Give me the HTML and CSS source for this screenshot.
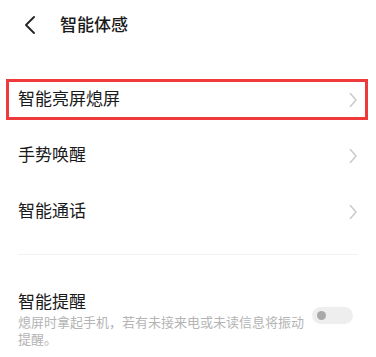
FILE: index.html
```html
<!DOCTYPE html>
<html lang="zh-CN">
<head>
<meta charset="utf-8">
<title>智能体感</title>
<link rel="stylesheet" href="styles.css">
</head>
<body>
<div class="page">
  <header class="topbar">
    <svg class="back" width="12" height="18" viewBox="0 0 12 18"><path d="M10 1 L2 9 L10 17" fill="none" stroke="#222" stroke-width="1.8" stroke-linecap="round" stroke-linejoin="round"/></svg>
    <h1 class="title">智能体感</h1>
  </header>
  <ul class="list">
    <li class="row highlight"><span class="label">智能亮屏熄屏</span><svg class="arrow" width="8" height="16" viewBox="0 0 8 16"><path d="M1 1 L7 8 L1 15" fill="none" stroke="#c9c9c9" stroke-width="1.4" stroke-linejoin="round"/></svg></li>
    <li class="row"><span class="label">手势唤醒</span><svg class="arrow" width="8" height="16" viewBox="0 0 8 16"><path d="M1 1 L7 8 L1 15" fill="none" stroke="#c9c9c9" stroke-width="1.4" stroke-linejoin="round"/></svg></li>
    <li class="row"><span class="label">智能通话</span><svg class="arrow" width="8" height="16" viewBox="0 0 8 16"><path d="M1 1 L7 8 L1 15" fill="none" stroke="#c9c9c9" stroke-width="1.4" stroke-linejoin="round"/></svg></li>
  </ul>
  <div class="divider"></div>
  <section class="setting">
    <div class="setting-text">
      <div class="label">智能提醒</div>
      <p class="desc">熄屏时拿起手机，若有未接来电或未读信息将振动提醒。</p>
    </div>
    <div class="toggle"><span class="knob"></span></div>
  </section>
</div>
</body>
</html>
```

FILE: styles.css
```css
* { box-sizing: border-box; }
html, body { margin: 0; padding: 0; background: #fff; }
body {
  font-family: "Noto Sans CJK SC", "Noto Sans", sans-serif;
  color: #1a1a1a;
}
.page { width: 376px; height: 357px; overflow: hidden; }
.topbar {
  height: 48px;
  display: flex;
  align-items: center;
  padding-left: 24px;
}
.back { display: block; margin-top: 1px; }
.title {
  margin: 0 0 0 24px;
  font-size: 17px;
  font-weight: 500;
  line-height: 24px;
}
.list {
  list-style: none;
  margin: 22px 0 0 0;
  padding: 0;
}
.row {
  height: 56px;
  display: flex;
  align-items: center;
  justify-content: space-between;
  padding: 0 19px 0 18px;
}
.label {
  font-size: 17px;
  line-height: 24px;
}
.arrow { display: block; margin-top: 3px; }
.highlight { position: relative; }
.highlight::after {
  content: "";
  position: absolute;
  left: 6px;
  right: 8px;
  top: 9px;
  bottom: 6px;
  border: 3px solid #ef3a3c;
}
.divider {
  height: 1px;
  background: #f1f1f1;
  margin: 16px 18px 0 18px;
}
.setting {
  display: flex;
  align-items: flex-start;
  padding: 34px 23px 0 18px;
}
.setting-text { flex: 1; min-width: 0; }
.desc {
  margin: 0;
  font-size: 13px;
  line-height: 17px;
  color: #b4b4b4;
}
.toggle {
  flex: none;
  width: 41px;
  height: 17px;
  border-radius: 9px;
  background: #eeeeee;
  margin: 18px 0 0 6px;
  display: flex;
  align-items: center;
  padding-left: 5px;
}
.knob {
  width: 9px;
  height: 9px;
  border-radius: 50%;
  background: #a9a9a9;
}
```
